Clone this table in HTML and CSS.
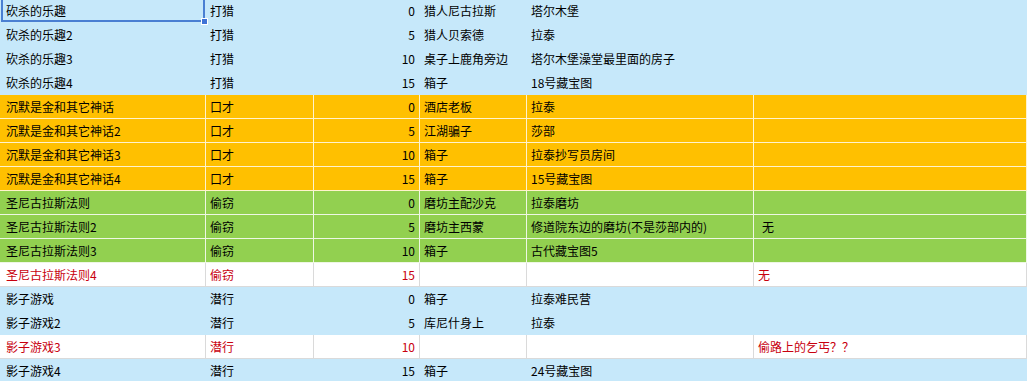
FILE: index.html
```html
<!DOCTYPE html>
<html lang="zh-CN">
<head>
<meta charset="utf-8">
<title>技能书</title>
<link rel="stylesheet" href="styles.css">
</head>
<body>
<div class="sheet">
  <div class="row blue">
    <div class="c c1 selected">砍杀的乐趣<span class="sel-box"></span><span class="sel-handle"></span></div>
    <div class="c c2">打猎</div><div class="c c3">0</div><div class="c c4">猎人尼古拉斯</div><div class="c c5">塔尔木堡</div><div class="c c6"></div>
  </div>
  <div class="row blue">
    <div class="c c1">砍杀的乐趣2</div><div class="c c2">打猎</div><div class="c c3">5</div><div class="c c4">猎人贝索德</div><div class="c c5">拉泰</div><div class="c c6"></div>
  </div>
  <div class="row blue">
    <div class="c c1">砍杀的乐趣3</div><div class="c c2">打猎</div><div class="c c3">10</div><div class="c c4">桌子上鹿角旁边</div><div class="c c5">塔尔木堡澡堂最里面的房子</div><div class="c c6"></div>
  </div>
  <div class="row blue">
    <div class="c c1">砍杀的乐趣4</div><div class="c c2">打猎</div><div class="c c3">15</div><div class="c c4">箱子</div><div class="c c5">18号藏宝图</div><div class="c c6"></div>
  </div>
  <div class="row orange">
    <div class="c c1">沉默是金和其它神话</div><div class="c c2">口才</div><div class="c c3">0</div><div class="c c4">酒店老板</div><div class="c c5">拉泰</div><div class="c c6"></div>
  </div>
  <div class="row orange">
    <div class="c c1">沉默是金和其它神话2</div><div class="c c2">口才</div><div class="c c3">5</div><div class="c c4">江湖骗子</div><div class="c c5">莎部</div><div class="c c6"></div>
  </div>
  <div class="row orange">
    <div class="c c1">沉默是金和其它神话3</div><div class="c c2">口才</div><div class="c c3">10</div><div class="c c4">箱子</div><div class="c c5">拉泰抄写员房间</div><div class="c c6"></div>
  </div>
  <div class="row orange">
    <div class="c c1">沉默是金和其它神话4</div><div class="c c2">口才</div><div class="c c3">15</div><div class="c c4">箱子</div><div class="c c5">15号藏宝图</div><div class="c c6"></div>
  </div>
  <div class="row green">
    <div class="c c1">圣尼古拉斯法则</div><div class="c c2">偷窃</div><div class="c c3">0</div><div class="c c4">磨坊主配沙克</div><div class="c c5">拉泰磨坊</div><div class="c c6"></div>
  </div>
  <div class="row green">
    <div class="c c1">圣尼古拉斯法则2</div><div class="c c2">偷窃</div><div class="c c3">5</div><div class="c c4">磨坊主西蒙</div><div class="c c5">修道院东边的磨坊(不是莎部内的)</div><div class="c c6 indent">无</div>
  </div>
  <div class="row green">
    <div class="c c1">圣尼古拉斯法则3</div><div class="c c2">偷窃</div><div class="c c3">10</div><div class="c c4">箱子</div><div class="c c5">古代藏宝图5</div><div class="c c6"></div>
  </div>
  <div class="row white">
    <div class="c c1">圣尼古拉斯法则4</div><div class="c c2">偷窃</div><div class="c c3">15</div><div class="c c4"></div><div class="c c5"></div><div class="c c6">无</div>
  </div>
  <div class="row blue">
    <div class="c c1">影子游戏</div><div class="c c2">潜行</div><div class="c c3">0</div><div class="c c4">箱子</div><div class="c c5">拉泰难民营</div><div class="c c6"></div>
  </div>
  <div class="row blue">
    <div class="c c1">影子游戏2</div><div class="c c2">潜行</div><div class="c c3">5</div><div class="c c4">库尼什身上</div><div class="c c5">拉泰</div><div class="c c6"></div>
  </div>
  <div class="row white">
    <div class="c c1">影子游戏3</div><div class="c c2">潜行</div><div class="c c3">10</div><div class="c c4"></div><div class="c c5"></div><div class="c c6">偷路上的乞丐？？</div>
  </div>
  <div class="row blue">
    <div class="c c1">影子游戏4</div><div class="c c2">潜行</div><div class="c c3">15</div><div class="c c4">箱子</div><div class="c c5">24号藏宝图</div><div class="c c6"></div>
  </div>
</div>
</body>
</html>
```
FILE: styles.css
```css
html, body {
  margin: 0;
  padding: 0;
  background: #ffffff;
}
body {
  font-family: "Microsoft YaHei", "Noto Sans CJK SC", "Noto Sans", sans-serif;
  font-size: 12px;
  color: #000000;
  overflow: hidden;
}
.sheet {
  margin-top: -1px;
  display: flex;
  flex-direction: column;
}
.row {
  display: grid;
  grid-template-columns: 206px 108px 106px 107px 227px 1fr;
  height: 24px;
}
.c {
  box-sizing: border-box;
  height: 24px;
  padding: 0 4px;
  border-right: 1px solid transparent;
  border-bottom: 1px solid transparent;
  display: flex;
  align-items: center;
  white-space: nowrap;
  overflow: hidden;
  line-height: 23px;
}
.c1 { padding-left: 6px; }
.c3 { justify-content: flex-end; }
.indent { padding-left: 8px; }

.blue .c {
  background: #c6e8fa;
  border-color: #c6e8fa;
}
.orange .c {
  background: #ffc000;
  border-color: #fff3cc;
}
.green .c {
  background: #92d050;
  border-color: #eef7e4;
}
.white .c {
  background: #ffffff;
  border-color: #dadada;
  color: #c8000e;
}

.selected {
  position: relative;
  overflow: visible;
}
.sel-box {
  position: absolute;
  left: 1px;
  top: -2px;
  right: 0;
  bottom: 0;
  border: 2px solid #4a7fd2;
  border-top: none;
  pointer-events: none;
}
.sel-handle {
  position: absolute;
  right: -3px;
  bottom: -3px;
  width: 5px;
  height: 5px;
  background: #3f73d6;
  border: 1px solid #ffffff;
  z-index: 2;
}
```
